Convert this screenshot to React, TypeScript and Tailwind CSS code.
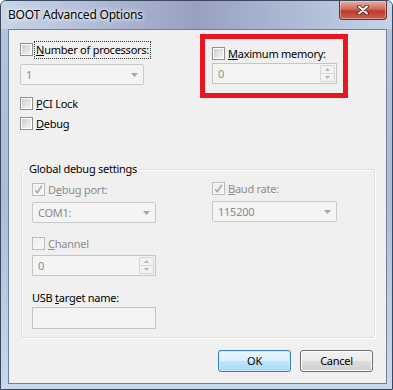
import React from 'react';

type BoxProps = { checked?: boolean; disabled?: boolean };

const CheckBox: React.FC<BoxProps> = ({ checked, disabled }) => (
  <span
    className={`flex h-[13px] w-[13px] shrink-0 border p-[1px] ${
      disabled ? 'border-[#bcbcbc] bg-[#f7f7f7]' : 'border-[#8e8f8f] bg-white'
    }`}
  >
    <span
      className={`flex h-full w-full items-center justify-center bg-gradient-to-br ${
        disabled ? 'from-[#eeeeee] to-[#f7f7f7]' : 'from-[#cbcfd4] to-[#f4f4f4]'
      }`}
    >
      {checked && (
        <svg width="9" height="9" viewBox="0 0 9 9" className="-mt-[1px]">
          <path d="M1.2 5.2 L3.4 7.6 L7.8 0.8" fill="none" stroke="#a9a9a9" strokeWidth="1.6" />
        </svg>
      )}
    </span>
  </span>
);

const Combo: React.FC<{ value: string; w: string }> = ({ value, w }) => (
  <div
    className={`flex h-[21px] ${w} items-center justify-between rounded-[2px] border border-[#c9c9c9] bg-[#f4f4f4] pl-[5px] pr-[5px] text-[#8a8a8a]`}
  >
    <span>{value}</span>
    <svg width="7" height="4" viewBox="0 0 7 4">
      <path d="M0 0h7L3.5 4z" fill="#a6a6a6" />
    </svg>
  </div>
);

const Spin: React.FC<{ value: string; w: string }> = ({ value, w }) => (
  <div className={`flex h-[21px] ${w} border border-[#c5c5c5] bg-[#f4f4f4] text-[#8a8a8a]`}>
    <span className="flex flex-1 items-center pl-[5px]">{value}</span>
    <div className="flex w-[17px] flex-col p-px">
      <div className="flex flex-1 items-center justify-center rounded-t-[2px] border border-[#d6d6d6] bg-[#f3f3f3]">
        <svg width="5" height="3" viewBox="0 0 5 3">
          <path d="M0 3h5L2.5 0z" fill="#b3b3b3" />
        </svg>
      </div>
      <div className="flex flex-1 items-center justify-center rounded-b-[2px] border border-t-0 border-[#d6d6d6] bg-[#f3f3f3]">
        <svg width="5" height="3" viewBox="0 0 5 3">
          <path d="M0 0h5L2.5 3z" fill="#b3b3b3" />
        </svg>
      </div>
    </div>
  </div>
);

const App: React.FC = () => {
  return (
    <div className="flex h-[390px] w-[393px] flex-col overflow-hidden rounded-t-[6px] border border-[#394a5e] bg-gradient-to-b from-[#b4c6dc] via-[#a9bdd5] to-[#c9d9ea] font-[family-name:'Noto_Sans',sans-serif] text-[11px] leading-[16px] tracking-[-0.25px] text-black">
      {/* title bar */}
      <div className="flex h-[28px] shrink-0 items-start justify-between bg-gradient-to-r from-[#c8d6e8] via-[#98a0c2] to-[#c4d4e9]">
        <span className="pl-[7px] pt-[6px] text-[12px] tracking-[-0.2px] [text-shadow:0_0_6px_#ffffff,0_0_3px_#ffffff]">
          BOOT Advanced Options
        </span>
        <button className="mr-[5px] flex h-[19px] w-[48px] items-center justify-center rounded-b-[4px] border border-t-0 border-[#6b2f2a] bg-[linear-gradient(#e6b0a6,#cf6a5c_45%,#bf3a2b_55%,#c9604f)] shadow-[inset_0_0_0_1px_rgba(255,210,200,0.5)]">
          <svg width="12" height="10" viewBox="0 0 12 10">
            <path d="M2 1.5 L10 8.5 M10 1.5 L2 8.5" stroke="#4a1f1a" strokeWidth="3.6" strokeLinecap="round" />
            <path d="M2 1.5 L10 8.5 M10 1.5 L2 8.5" stroke="#ffffff" strokeWidth="2" strokeLinecap="round" />
          </svg>
        </button>
      </div>

      {/* client area */}
      <div className="mb-[5px] ml-[7px] mr-[5px] flex flex-1 flex-col border border-[#6e8197] bg-[#f0f0f0] pl-[11px]">
        <div className="flex items-start">
          <div className="flex w-[180px] flex-col pt-[13px]">
            <div className="flex h-[13px] items-center gap-[1px]">
              <CheckBox />
              <span className="ml-[1px] px-[1px] outline-1 outline-dotted outline-[#333]">
                <span className="underline">N</span>umber of processors:
              </span>
            </div>
            <div className="mt-[8px]">
              <Combo value="1" w="w-[124px]" />
            </div>
            <div className="mt-[12px] flex h-[13px] items-center gap-[3px]">
              <CheckBox />
              <span>
                <span className="underline">P</span>CI Lock
              </span>
            </div>
            <div className="mt-[7px] flex h-[13px] items-center gap-[3px]">
              <CheckBox />
              <span>
                <span className="underline">D</span>ebug
              </span>
            </div>
          </div>

          <div className="mt-[4px] flex h-[64px] w-[148px] flex-col border-[5px] border-[#e9161f] pl-[7px] pt-[8px]">
            <div className="flex h-[13px] items-center gap-[3px]">
              <CheckBox />
              <span>
                <span className="underline">M</span>aximum memory:
              </span>
            </div>
            <div className="mt-[3px]">
              <Spin value="0" w="w-[125px]" />
            </div>
          </div>
        </div>

        <fieldset className="ml-[1px] mt-[31px] w-[354px] rounded-[3px] border border-[#d5dfe5] px-[10px] pb-[8px] pt-[6px] shadow-[inset_1px_1px_0_#ffffff,1px_1px_0_#ffffff]">
          <legend className="-ml-[4px] px-[1px]">Global debug settings</legend>
          <div className="flex items-start">
            <div className="flex w-[180px] flex-col">
              <div className="flex h-[13px] items-center gap-[3px] text-[#8d8d8d]">
                <CheckBox checked disabled />
                <span>
                  D<span className="underline">e</span>bug port:
                </span>
              </div>
              <div className="mt-[6px]">
                <Combo value="COM1:" w="w-[124px]" />
              </div>
              <div className="mt-[14px] flex h-[13px] items-center gap-[3px] text-[#8d8d8d]">
                <CheckBox disabled />
                <span>
                  <span className="underline">C</span>hannel
                </span>
              </div>
              <div className="mt-[5px]">
                <Spin value="0" w="w-[124px]" />
              </div>
              <div className="mt-[14px]">
                USB <span className="underline">t</span>arget name:
              </div>
              <div className="mt-[1px] h-[22px] w-[124px] border border-[#c3c3c3] bg-[#f3f3f3]" />
            </div>
            <div className="-mt-[1px] flex flex-col">
              <div className="flex h-[13px] items-center gap-[3px] text-[#8d8d8d]">
                <CheckBox checked disabled />
                <span>
                  <span className="underline">B</span>aud rate:
                </span>
              </div>
              <div className="mt-[6px]">
                <Combo value="115200" w="w-[125px]" />
              </div>
            </div>
          </div>
        </fieldset>

        <div className="mt-[12px] flex justify-end gap-[9px] pr-[13px]">
          <button className="h-[22px] w-[73px] rounded-[3px] border border-[#3c7fb1] bg-[linear-gradient(#eaf6fd,#d9f0fc_50%,#bee6fd_50%,#a7d9f5)] shadow-[inset_0_0_0_1px_#cdeafa]">
            OK
          </button>
          <button className="h-[22px] w-[73px] rounded-[3px] border border-[#707070] bg-[linear-gradient(#f2f2f2,#ebebeb_50%,#dddddd_50%,#cfcfcf)] shadow-[inset_0_0_0_1px_#fbfbfb]">
            Cancel
          </button>
        </div>
      </div>
    </div>
  );
};

export default App;
